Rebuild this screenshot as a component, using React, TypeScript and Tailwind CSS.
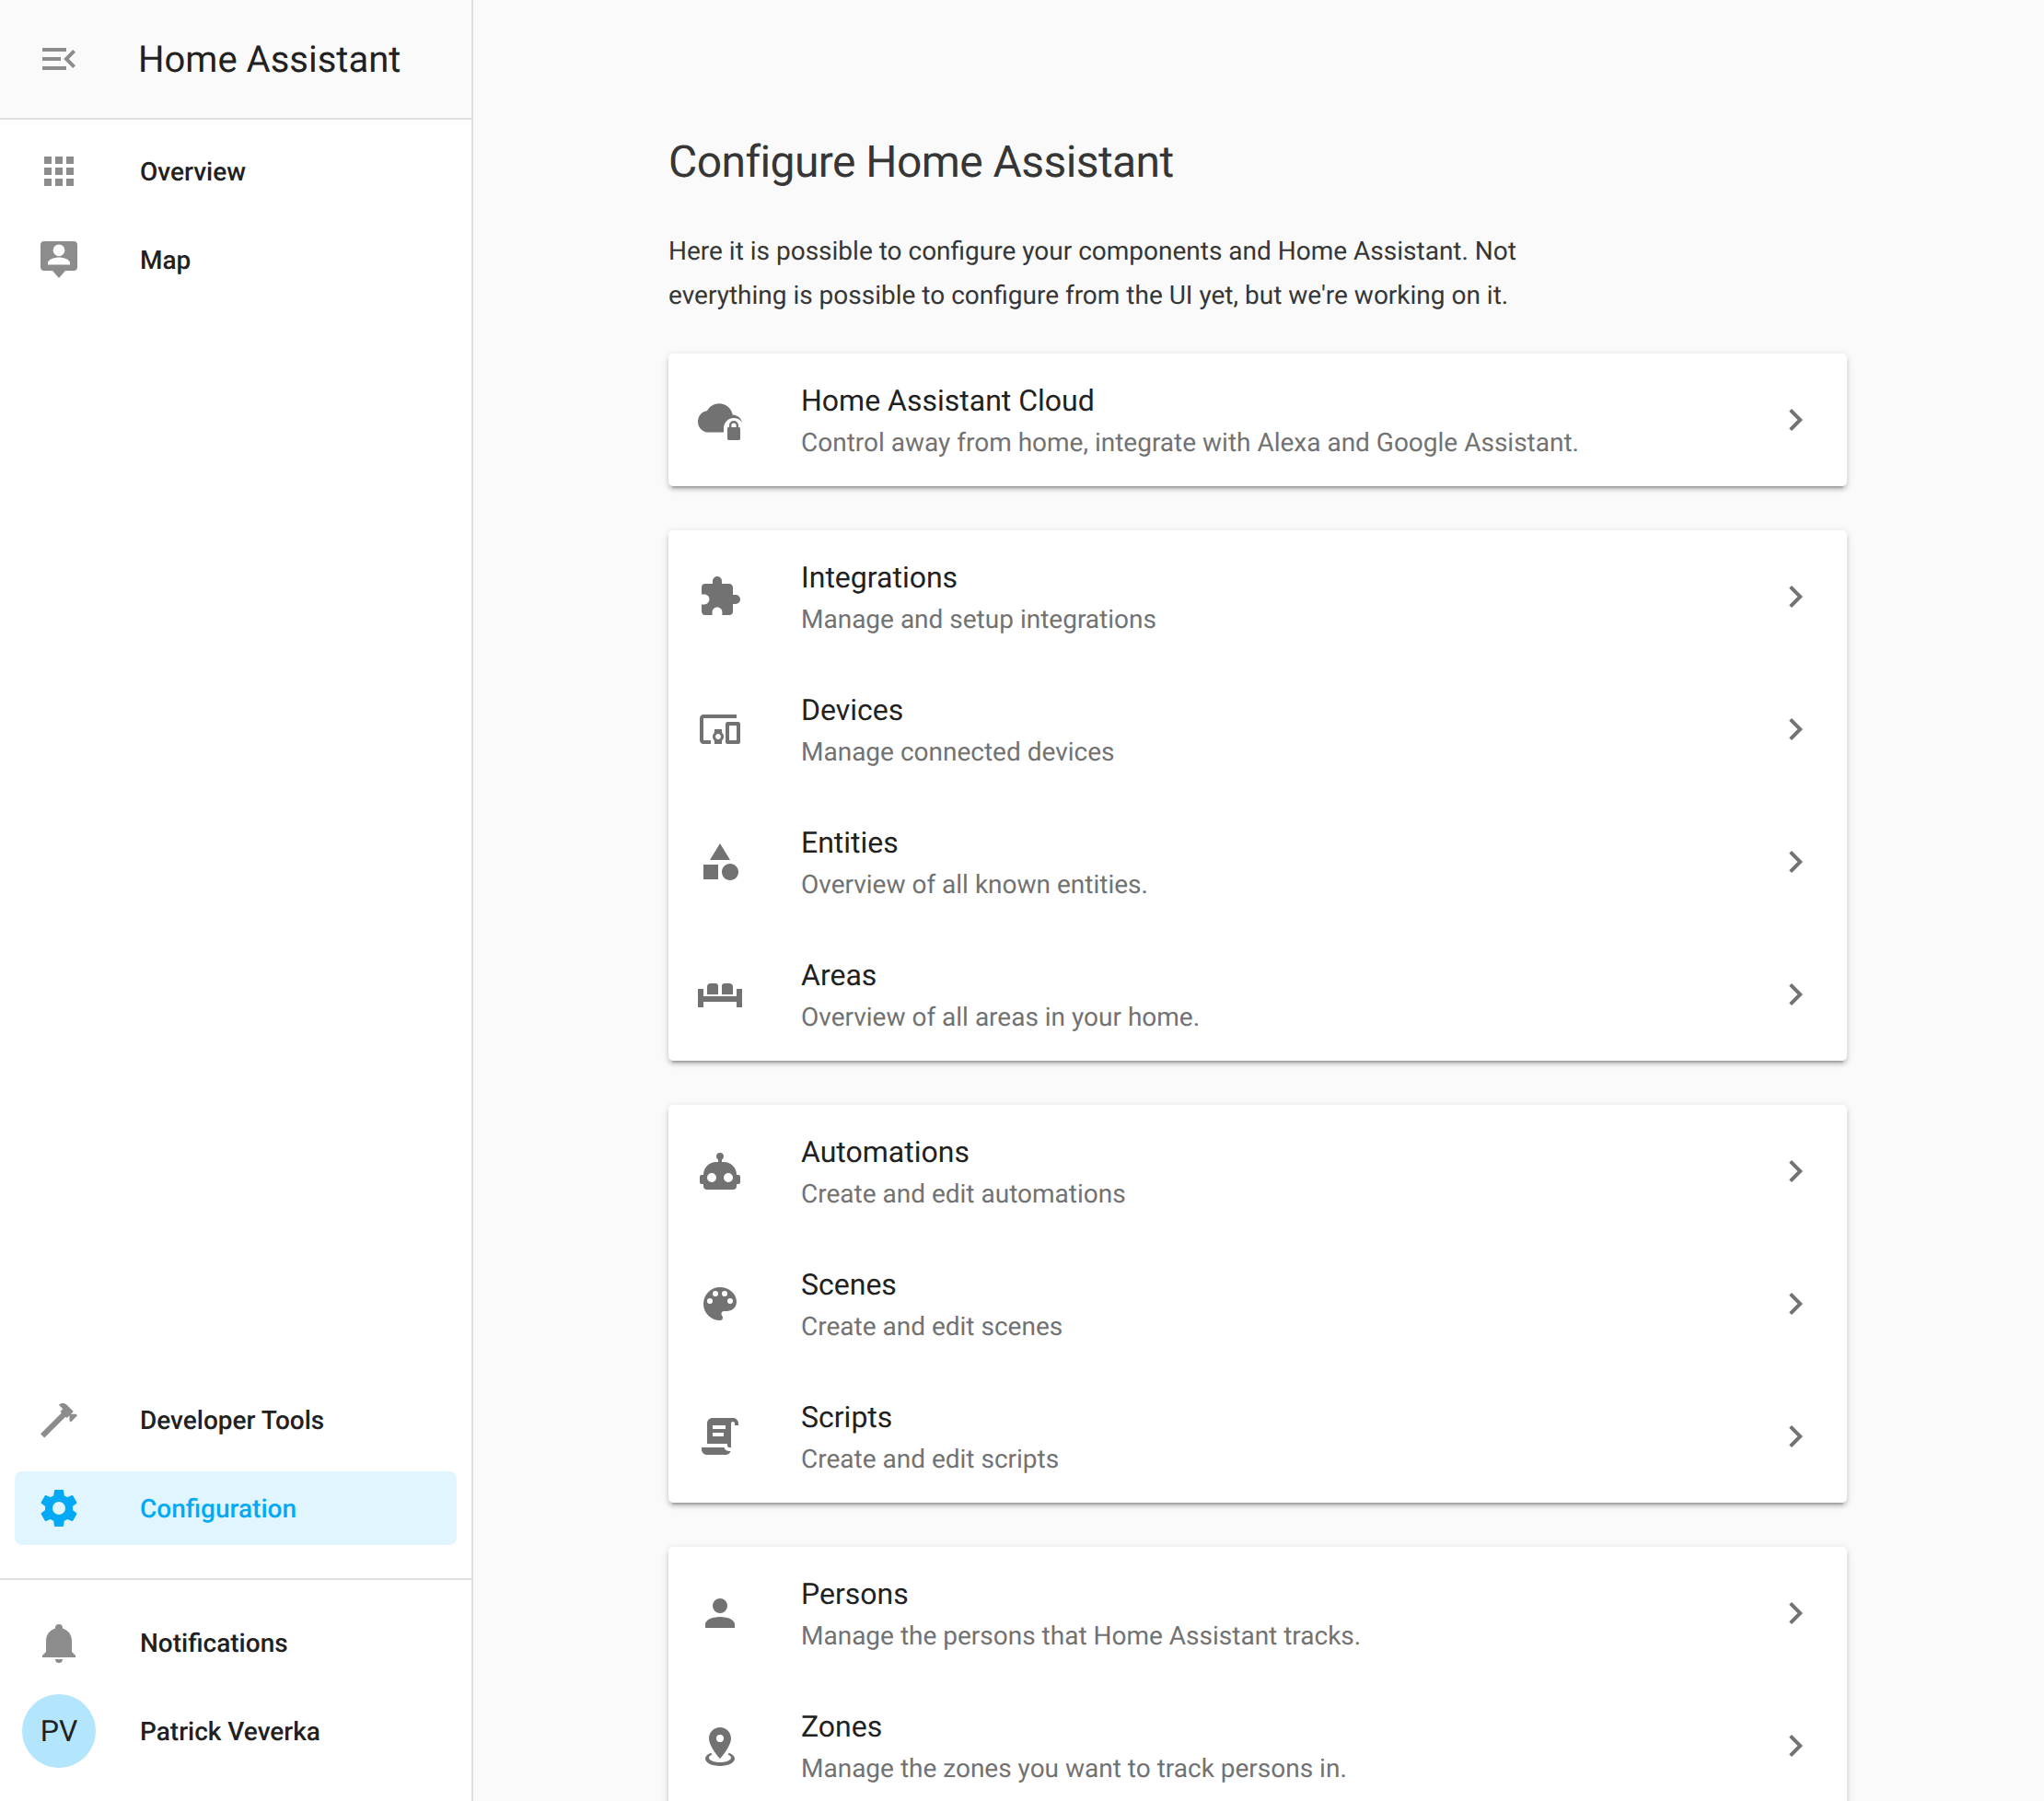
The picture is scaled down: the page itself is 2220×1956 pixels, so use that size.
import React from "react";

const P: Record<string, string> = {
  menuOpen: "M21,15.61L19.59,17L14.58,12L19.59,7L21,8.39L17.44,12L21,15.61M3,6H16V8H3V6M3,13V11H13V13H3M3,18V16H16V18H3Z",
  apps: "M16,20H20V16H16M16,14H20V10H16M10,8H14V4H10M16,8H20V4H16M10,14H14V10H10M4,14H8V10H4M4,20H8V16H4M10,20H14V16H10M4,8H8V4H4V8Z",
  map: "M4,2H20A2,2 0 0,1 22,4V16A2,2 0 0,1 20,18H15.5L12,22L8.5,18H4A2,2 0 0,1 2,16V4A2,2 0 0,1 4,2M12,3.7A3.2,3.2 0 0,0 8.8,6.9A3.2,3.2 0 0,0 12,10.1A3.2,3.2 0 0,0 15.2,6.9A3.2,3.2 0 0,0 12,3.7M18,14.7V13.7C18,11.7 14,10.7 12,10.7C10,10.7 6,11.7 6,13.7V14.7H18Z",
  hammer: "M2 19.63L13.43 8.2L12.72 7.5L14.14 6.07L12 3.89C13.2 2.7 15.09 2.7 16.27 3.89L19.87 7.5L18.45 8.91H21.29L22 9.62L18.45 13.21L17.74 12.5V9.62L16.27 11.04L15.56 10.33L4.13 21.76L2 19.63Z",
  cog: "M12,15.5A3.5,3.5 0 0,1 8.5,12A3.5,3.5 0 0,1 12,8.5A3.5,3.5 0 0,1 15.5,12A3.5,3.5 0 0,1 12,15.5M19.43,12.97C19.47,12.65 19.5,12.33 19.5,12C19.5,11.67 19.47,11.34 19.43,11L21.54,9.37C21.73,9.22 21.78,8.95 21.66,8.73L19.66,5.27C19.54,5.05 19.27,4.96 19.05,5.05L16.56,6.05C16.04,5.66 15.5,5.32 14.87,5.07L14.5,2.42C14.46,2.18 14.25,2 14,2H10C9.75,2 9.54,2.18 9.5,2.42L9.13,5.07C8.5,5.32 7.96,5.66 7.44,6.05L4.95,5.05C4.73,4.96 4.46,5.05 4.34,5.27L2.34,8.73C2.21,8.95 2.27,9.22 2.46,9.37L4.57,11C4.53,11.34 4.5,11.67 4.5,12C4.5,12.33 4.53,12.65 4.57,12.97L2.46,14.63C2.27,14.78 2.21,15.05 2.34,15.27L4.34,18.73C4.46,18.95 4.73,19.03 4.95,18.95L7.44,17.94C7.96,18.34 8.5,18.68 9.13,18.93L9.5,21.58C9.54,21.82 9.75,22 10,22H14C14.25,22 14.46,21.82 14.5,21.58L14.87,18.93C15.5,18.67 16.04,18.34 16.56,17.94L19.05,18.95C19.27,19.03 19.54,18.95 19.66,18.73L21.66,15.27C21.78,15.05 21.73,14.78 21.54,14.63L19.43,12.97Z",
  bell: "M21,19V20H3V19L5,17V11C5,7.9 7.03,5.17 10,4.29C10,4.19 10,4.1 10,4A2,2 0 0,1 12,2A2,2 0 0,1 14,4C14,4.1 14,4.19 14,4.29C16.97,5.17 19,7.9 19,11V17L21,19M14,21A2,2 0 0,1 12,23A2,2 0 0,1 10,21",
  puzzle: "M20.5,11H19V7C19,5.89 18.1,5 17,5H13V3.5A2.5,2.5 0 0,0 10.5,1A2.5,2.5 0 0,0 8,3.5V5H4A2,2 0 0,0 2,7V10.8H3.5C5,10.8 6.2,12 6.2,13.5C6.2,15 5,16.2 3.5,16.2H2V20A2,2 0 0,0 4,22H7.8V20.5C7.8,19 9,17.8 10.5,17.8C12,17.8 13.2,19 13.2,20.5V22H17A2,2 0 0,0 19,20V16H20.5A2.5,2.5 0 0,0 23,13.5A2.5,2.5 0 0,0 20.5,11Z",
  devices: "M3 6H21V4H3C1.9 4 1 4.9 1 6V18C1 19.1 1.9 20 3 20H7V18H3V6M13 12H9V13.78C8.39 14.33 8 15.11 8 16C8 16.89 8.39 17.67 9 18.22V20H13V18.22C13.61 17.67 14 16.88 14 16S13.61 14.33 13 13.78V12M11 17.5C10.17 17.5 9.5 16.83 9.5 16S10.17 14.5 11 14.5 12.5 15.17 12.5 16 11.83 17.5 11 17.5M22 8H16C15.5 8 15 8.5 15 9V19C15 19.5 15.5 20 16 20H22C22.5 20 23 19.5 23 19V9C23 8.5 22.5 8 22 8M21 18H17V10H21V18Z",
  shape: "M11,13.5V21.5H3V13.5H11M12,2L17.5,11H6.5L12,2M17.5,13C20,13 22,15 22,17.5C22,20 20,22 17.5,22C15,22 13,20 13,17.5C13,15 15,13 17.5,13Z",
  sofa: "M7,6H9.5A1.5,1.5 0 0,1 11,7.5V12H5V8A2,2 0 0,1 7,6M14.5,6H17A2,2 0 0,1 19,8V12H13V7.5A1.5,1.5 0 0,1 14.5,6M0,9H3V13H21V9H24V19H21V16H3V19H0Z",
  robot: "M12,2A2,2 0 0,1 14,4C14,4.74 13.6,5.39 13,5.73V7H14A7,7 0 0,1 21,14H22A1,1 0 0,1 23,15V18A1,1 0 0,1 22,19H21V20A2,2 0 0,1 19,22H5A2,2 0 0,1 3,20V19H2A1,1 0 0,1 1,18V15A1,1 0 0,1 2,14H3A7,7 0 0,1 10,7H11V5.73C10.4,5.39 10,4.74 10,4A2,2 0 0,1 12,2M7.5,13A2.5,2.5 0 0,0 5,15.5A2.5,2.5 0 0,0 7.5,18A2.5,2.5 0 0,0 10,15.5A2.5,2.5 0 0,0 7.5,13M16.5,13A2.5,2.5 0 0,0 14,15.5A2.5,2.5 0 0,0 16.5,18A2.5,2.5 0 0,0 19,15.5A2.5,2.5 0 0,0 16.5,13Z",
  palette: "M17.5,12A1.5,1.5 0 0,1 16,10.5A1.5,1.5 0 0,1 17.5,9A1.5,1.5 0 0,1 19,10.5A1.5,1.5 0 0,1 17.5,12M14.5,8A1.5,1.5 0 0,1 13,6.5A1.5,1.5 0 0,1 14.5,5A1.5,1.5 0 0,1 16,6.5A1.5,1.5 0 0,1 14.5,8M9.5,8A1.5,1.5 0 0,1 8,6.5A1.5,1.5 0 0,1 9.5,5A1.5,1.5 0 0,1 11,6.5A1.5,1.5 0 0,1 9.5,8M6.5,12A1.5,1.5 0 0,1 5,10.5A1.5,1.5 0 0,1 6.5,9A1.5,1.5 0 0,1 8,10.5A1.5,1.5 0 0,1 6.5,12M12,3A9,9 0 0,0 3,12A9,9 0 0,0 12,21A1.5,1.5 0 0,0 13.5,19.5C13.5,19.11 13.35,18.76 13.11,18.5C12.88,18.23 12.73,17.88 12.73,17.5A1.5,1.5 0 0,1 14.23,16H16A5,5 0 0,0 21,11C21,6.58 16.97,3 12,3Z",
  script: "M17.8,20C17.4,21.2 16.3,22 15,22H5C3.3,22 2,20.7 2,19V18H5L14.2,18C14.6,19.2 15.7,20 17,20H17.8M19,2C20.7,2 22,3.3 22,5V6H20V5C20,4.4 19.6,4 19,4C18.4,4 18,4.4 18,5V18H17C16.4,18 16,17.6 16,17V16H5V5C5,3.3 6.3,2 8,2H19M8,6V8H15V6H8M8,10V12H14V10H8Z",
  account: "M12,4A4,4 0 0,1 16,8A4,4 0 0,1 12,12A4,4 0 0,1 8,8A4,4 0 0,1 12,4M12,14C16.42,14 20,15.79 20,18V20H4V18C4,15.79 7.58,14 12,14Z",
  marker: "M12,2C15.31,2 18,4.66 18,7.95C18,12.41 12,19 12,19C12,19 6,12.41 6,7.95C6,4.66 8.69,2 12,2M12,6A2,2 0 0,0 10,8A2,2 0 0,0 12,10A2,2 0 0,0 14,8A2,2 0 0,0 12,6M20,19C20,21.21 16.42,23 12,23C7.58,23 4,21.21 4,19C4,17.71 5.22,16.56 7.11,15.83L7.75,16.74C6.67,17.19 6,17.81 6,18.5C6,19.88 8.69,21 12,21C15.31,21 18,19.88 18,18.5C18,17.81 17.33,17.19 16.25,16.74L16.89,15.83C18.78,16.56 20,17.71 20,19Z",
  chevron: "M8.59,16.58L13.17,12L8.59,7.41L10,6L16,12L10,18L8.59,16.58Z",
};

function Icon({ name, className }: { name: string; className: string }) {
  return (
    <svg viewBox="0 0 24 24" className={`h-12 w-12 shrink-0 fill-current ${className}`}>
      <path d={P[name]} />
    </svg>
  );
}

function CloudLock() {
  return (
    <svg viewBox="0 0 24 24" className="h-12 w-12 shrink-0 fill-current text-[#727272]">
      <path d="M18.9,9.2C18.2,5.7 15.2,3.1 11.6,3.1C8.7,3.1 6.2,4.7 5,7.1C2.1,7.4 0,10 0,13C0,16.3 2.7,18.8 6,18.8H19A5,5 0 0,0 24,13.9C24,11.4 21.7,9.4 18.9,9.2Z" />
      <path className="fill-white" d="M14,16.5A5.5,5.5 0 0,1 25,16.5V24H14Z" />
      <path d="M16.7,16H22.3A0.7,0.7 0 0,1 23,16.7V22.3A0.7,0.7 0 0,1 22.3,23H16.7A0.7,0.7 0 0,1 16,22.3V16.7A0.7,0.7 0 0,1 16.7,16Z" />
      <path d="M17.6,16.5V15A1.9,1.9 0 0,1 21.4,15V16.5" fill="none" stroke="currentColor" strokeWidth="1.2" />
    </svg>
  );
}

function NavItem({ icon, label, active }: { icon: string; label: string; active?: boolean }) {
  return (
    <div className={`mx-4 flex h-20 items-center rounded-lg pl-6 ${active ? "bg-[#e0f5fe]" : ""}`}>
      <Icon name={icon} className={active ? "text-[#03a9f4]" : "text-[#8c8c8c]"} />
      <span className={`ml-16 pt-0.5 text-[28px] font-medium ${active ? "text-[#03a9f4]" : "text-[#212121]"}`}>{label}</span>
    </div>
  );
}

function Row({ icon, title, sub }: { icon: string; title: string; sub: string }) {
  return (
    <div className="flex h-36 items-center pl-8 pr-8">
      {icon === "cloud" ? <CloudLock /> : <Icon name={icon} className="text-[#727272]" />}
      <div className="ml-16 min-w-0 flex-1">
        <div className="text-[32px] leading-[48px] text-[#212121]">{title}</div>
        <div className="pt-0.5 text-[28px] leading-10 text-[#727272]">{sub}</div>
      </div>
      <Icon name="chevron" className="text-[#727272]" />
    </div>
  );
}

function Card({ children }: { children: React.ReactNode }) {
  return (
    <div className="mb-12 rounded-[5px] bg-white shadow-[0_4px_4px_0_rgba(0,0,0,0.14),0_2px_10px_0_rgba(0,0,0,0.12),0_6px_2px_-4px_rgba(0,0,0,0.2)]">
      {children}
    </div>
  );
}

export default function App() {
  return (
    <div className="flex h-[1956px] w-[2220px] overflow-hidden bg-[#fafafa] font-['Roboto',sans-serif] antialiased [text-rendering:geometricPrecision]">
      <aside className="flex w-[514px] shrink-0 flex-col border-r-2 border-[#e0e0e0] bg-white">
        <header className="flex h-[130px] shrink-0 items-center border-b-2 border-[#e0e0e0] bg-[#fafafa] pl-10">
          <Icon name="menuOpen" className="text-[#8c8c8c]" />
          <span className="ml-[62px] pt-0.5 text-[40px] text-[#212121]">Home Assistant</span>
        </header>
        <nav className="flex flex-col gap-4 pt-4">
          <NavItem icon="apps" label="Overview" />
          <NavItem icon="map" label="Map" />
        </nav>
        <div className="mt-auto flex flex-col gap-4 pb-9">
          <NavItem icon="hammer" label="Developer Tools" />
          <NavItem icon="cog" label="Configuration" active />
        </div>
        <div className="flex flex-col gap-4 border-t-2 border-[#e0e0e0] pb-9 pt-7">
          <NavItem icon="bell" label="Notifications" />
          <div className="mx-4 flex h-20 items-center pl-2">
            <div className="flex h-20 w-20 items-center justify-center rounded-full bg-[#b3e5fc] text-[32px] text-[#212121]">PV</div>
            <span className="ml-12 pt-0.5 text-[28px] font-medium text-[#212121]">Patrick Veverka</span>
          </div>
        </div>
      </aside>
      <main className="min-w-0 flex-1 pl-[212px] pt-[144px]">
        <div className="w-[1280px]">
          <h1 className="text-[48px] leading-[64px] tracking-[-0.012em] text-[#212121] opacity-90">Configure Home Assistant</h1>
          <p className="mb-[39px] mt-[41px] w-[1000px] text-[28px] leading-[48px] text-[#212121] opacity-90">
            Here it is possible to configure your components and Home Assistant. Not everything is possible to configure from the UI yet, but we're working on it.
          </p>
          <Card>
            <Row icon="cloud" title="Home Assistant Cloud" sub="Control away from home, integrate with Alexa and Google Assistant." />
          </Card>
          <Card>
            <Row icon="puzzle" title="Integrations" sub="Manage and setup integrations" />
            <Row icon="devices" title="Devices" sub="Manage connected devices" />
            <Row icon="shape" title="Entities" sub="Overview of all known entities." />
            <Row icon="sofa" title="Areas" sub="Overview of all areas in your home." />
          </Card>
          <Card>
            <Row icon="robot" title="Automations" sub="Create and edit automations" />
            <Row icon="palette" title="Scenes" sub="Create and edit scenes" />
            <Row icon="script" title="Scripts" sub="Create and edit scripts" />
          </Card>
          <Card>
            <Row icon="account" title="Persons" sub="Manage the persons that Home Assistant tracks." />
            <Row icon="marker" title="Zones" sub="Manage the zones you want to track persons in." />
          </Card>
        </div>
      </main>
    </div>
  );
}
